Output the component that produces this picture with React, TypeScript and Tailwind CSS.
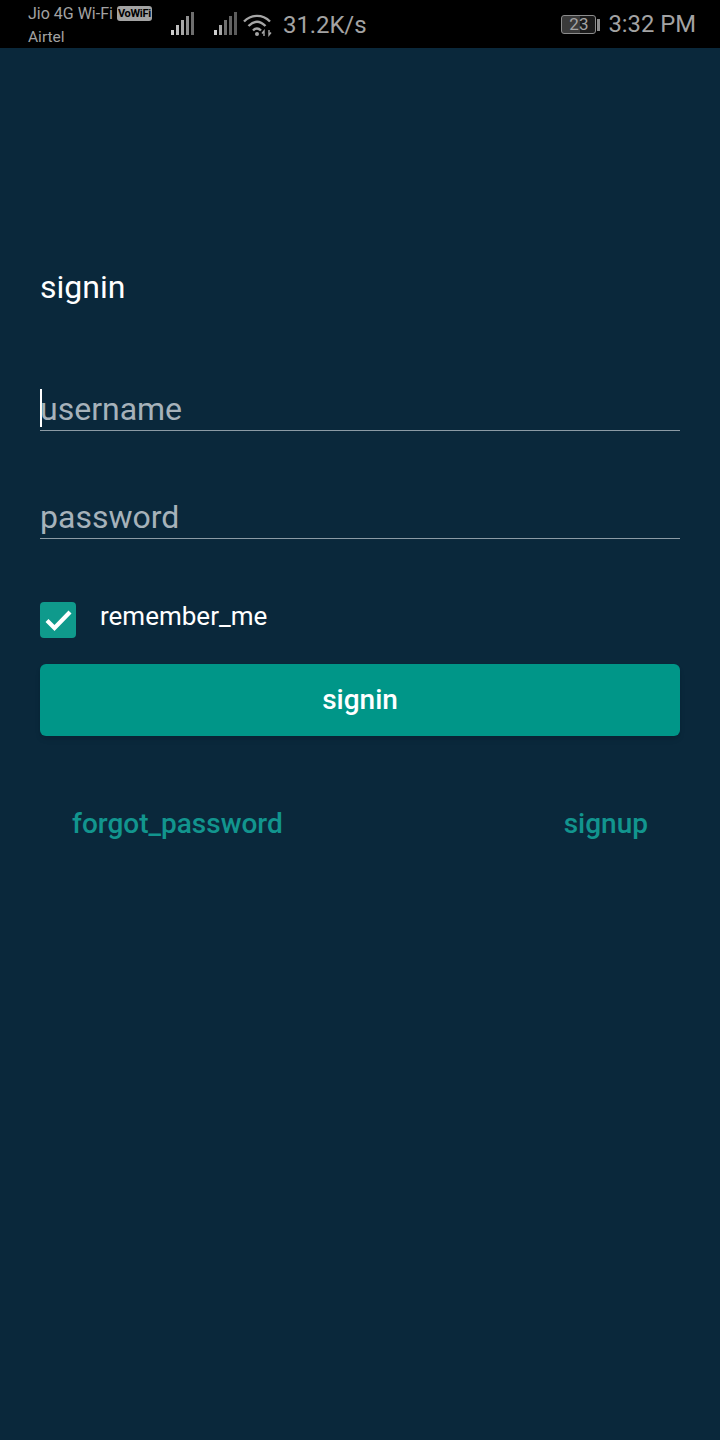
const font = 'font-[Roboto,sans-serif]';

// bars run bright to dim, second sim is weaker
function SignalIcon({ className, fills }: { className?: string; fills: string[] }) {
  const heights = [5, 10, 15, 19, 23];
  return (
    <svg width="24" height="24" viewBox="0 0 24 24" className={`-translate-y-[1px] ${className ?? ''}`}>
      {heights.map((h, i) => (
        <rect key={i} x={1 + i * 5} y={23 - h} width="3" height={h} fill={fills[i]} />
      ))}
    </svg>
  );
}

function WifiIcon() {
  return (
    <svg width="30" height="24" viewBox="0 0 30 24" fill="none" stroke="#a6a6a6" strokeWidth="2.4">
      <path d="M1 8.5C8.5 1 19.5 1 27 8.5" />
      <path d="M5.5 13C11 7.5 17 7.5 22.5 13" />
      <path d="M10 17.5C12.5 15 15.5 15 18 17.5" />
      <circle cx="14" cy="21" r="2" fill="#a6a6a6" stroke="none" />
      <path d="M21 23v-5l-2 2.5M26 17v5l2-2.5" strokeWidth="1.4" />
    </svg>
  );
}

function StatusBar() {
  return (
    <div className="flex h-12 items-center justify-between bg-black pt-[2px] pl-7 pr-6 text-[#a3a3a3]">
      <div className="flex items-center">
        <div className="w-[142px] text-[15.5px] leading-[22px]">
          <div className="flex items-center gap-1 text-[16px]">
            Jio 4G Wi-Fi
            <span className="rounded-[3px] bg-[#a3a3a3] px-[1px] text-[11px] leading-[15px] font-bold tracking-[-0.3px] text-black">VoWiFi</span>
          </div>
          <div className="mt-[1px]">Airtel</div>
        </div>
        <SignalIcon fills={['#cfcfcf', '#bdbdbd', '#a8a8a8', '#8f8f8f', '#6e6e6e']} />
        <SignalIcon className="ml-[19px]" fills={['#cfcfcf', '#a8a8a8', '#707070', '#636363', '#5c5c5c']} />
        <div className="ml-1.5"><WifiIcon /></div>
        <span className="ml-[10px] text-[24px] tracking-[-0.1px]">31.2K/s</span>
      </div>
      <div className="flex items-center">
        <div className="flex h-[19px] w-[35px] items-center justify-center rounded-[3px] border border-[#8c8c8c] bg-[linear-gradient(90deg,#3a3a3a_55%,#1a1a1a_55%)] text-[17px] leading-none">
          23
        </div>
        <div className="ml-[1px] h-[12px] w-[3px] bg-[#8c8c8c]" />
        <span className="ml-[8px] text-[23.8px] leading-none">3:32 PM</span>
      </div>
    </div>
  );
}

function Field({ label, focused }: { label: string; focused?: boolean }) {
  return (
    <div className="flex h-[50px] items-end border-b border-[#8c9ba5]">
      {focused && <div className="mb-[3px] h-[38px] w-[2px] bg-white" />}
      <span className={`text-[32px] leading-[42px] text-[#a6b2ba] ${focused ? '-ml-[2px]' : ''}`}>{label}</span>
    </div>
  );
}

export default function App() {
  return (
    <div className={`min-h-[1440px] bg-[#0a283b] ${font}`}>
      <StatusBar />
      <div className="px-10 pt-[217px]">
        <h1 className="text-[32px] leading-[44px] font-normal text-white">signin</h1>
        <div className="mt-[72px]"><Field label="username" focused /></div>
        <div className="mt-[58px]"><Field label="password" /></div>

        <div className="mt-[63px] flex items-start">
          <div className="flex h-9 w-9 items-center justify-center rounded-[4px] bg-[#0f9a8c]">
            <svg width="28" height="24" viewBox="0 0 28 24" fill="none" stroke="white" strokeWidth="4.2">
              <path d="M3 12.5L10.5 20L26 4" />
            </svg>
          </div>
          <span className="ml-6 text-[26px] leading-[28px] text-white">remember_me</span>
        </div>

        <button className="mt-[26px] h-[72px] w-full rounded-[6px] bg-[#009688] text-[28px] font-medium text-white shadow-md">
          signin
        </button>

        <div className="mt-[64px] flex justify-between px-8 text-[28px] leading-[48px] font-medium text-[#12958e]">
          <span>forgot_password</span>
          <span>signup</span>
        </div>
      </div>
    </div>
  );
}
